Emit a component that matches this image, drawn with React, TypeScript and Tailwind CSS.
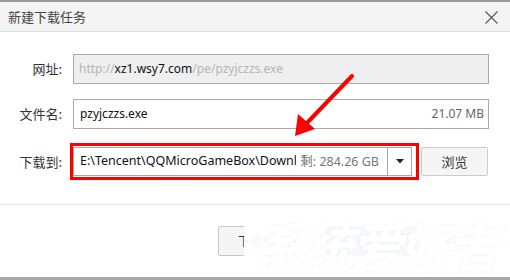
const cjk = 'font-["Microsoft_YaHei","Noto_Sans_CJK_SC",sans-serif]'
const latin = 'font-["Segoe_UI","Noto_Sans","Noto_Sans_CJK_SC",sans-serif]'

function Label({ text }: { text: string }) {
  return (
    <div className={`w-[62px] shrink-0 text-right text-[13px] text-[#333] ${cjk}`}>{text}</div>
  )
}

// 新建下载任务 dialog (reference: 510x280 crop)
export default function App() {
  return (
    <div className={`relative h-[280px] w-[510px] overflow-hidden bg-white ${latin}`}>
      {/* title bar */}
      <div className="flex h-[32px] items-center justify-between border-t-2 border-b border-t-[#9a9a9a] border-b-[#dddddd] bg-[#f4f4f4] pl-[8px] pr-[12px]">
        <span className={`text-[13px] text-[#444] ${cjk}`}>新建下载任务</span>
        <svg width="13" height="13" viewBox="0 0 13 13" className="mt-[1px]">
          <path d="M0.5 0.5 L12.5 12.5 M12.5 0.5 L0.5 12.5" stroke="#555" strokeWidth="1.1" />
        </svg>
      </div>

      {/* form */}
      <div className="flex flex-col pr-[21px] pt-[22px]">
        <div className="flex h-[30px] items-center gap-[11px]">
          <Label text="网址:" />
          <div className="flex h-full flex-1 items-center border border-[#aaaaaa] bg-[#efefef] px-[5px] text-[12px] text-[#b5b5b5]">
            <span>http://</span>
            <span className="text-[#111]">xz1.wsy7.com</span>
            <span>/pe/pzyjczzs.exe</span>
          </div>
        </div>

        <div className="mt-[15px] flex h-[30px] items-center gap-[11px]">
          <Label text="文件名:" />
          <div className="flex h-full flex-1 items-center justify-between border border-[#aaaaaa] bg-white pl-[6px] pr-[4px] text-[12px]">
            <span className="text-[#111]">pzyjczzs.exe</span>
            <span className="text-[#666]">21.07 MB</span>
          </div>
        </div>

        <div className="mt-[18px] flex h-[29px] items-center gap-[11px]">
          <Label text="下载到:" />
          <div className="relative flex h-full w-[339px] items-center border border-[#aaaaaa] bg-white text-[12.5px]">
            <div className="flex min-w-0 flex-1 items-center pl-[6px] pr-[8px]">
              <span className="min-w-0 flex-1 overflow-hidden whitespace-nowrap text-[#111]">
                E:\Tencent\QQMicroGameBox\Downl
              </span>
              <span className="ml-[4px] shrink-0 text-[#777]">
                <span className={cjk}>剩</span>: 284.26 GB
              </span>
            </div>
            <div className="flex h-full w-[24px] items-center justify-center border-l border-[#aaaaaa]">
              <svg width="8" height="5" viewBox="0 0 8 5">
                <path d="M0 0 H8 L4 4.5 Z" fill="#222" />
              </svg>
            </div>
            {/* red annotation box */}
            <div className="pointer-events-none absolute -bottom-[5px] -left-[4px] -right-[8px] -top-[5px] border-[3px] border-[#ff0000]" />
          </div>
          <button
            type="button"
            className={`ml-[-2px] h-full w-[67px] rounded-[2px] border border-[#cccccc] bg-[#f5f5f5] text-[13px] text-[#333] ${cjk}`}
          >
            浏览
          </button>
        </div>
      </div>

      <div className="mt-[28px] border-t border-[#e2e2e2]" />

      {/* footer buttons */}
      <div className={`flex justify-end gap-[8px] pr-[21px] pt-[21px] text-[12px] ${cjk}`}>
        <button type="button" className="h-[30px] w-[100px] rounded-[2px] border border-[#c8c8c8] bg-[#f5f5f5] text-[#333]">
          下载并运行
        </button>
        <button type="button" className="h-[30px] w-[92px] rounded-[2px] border border-[#2f80e0] bg-[#3a8ee6] text-white">
          下载
        </button>
        <button type="button" className="h-[30px] w-[63px] rounded-[2px] border border-[#c8c8c8] bg-[#f5f5f5] text-[#333]">
          取消
        </button>
      </div>

      {/* bottom edge */}
      <div className="absolute bottom-0 left-0 right-0 h-[3px] bg-[#a8a8a8]" />

      {/* watermark */}
      <div
        className={`absolute left-[244px] top-[214px] flex h-[61px] w-[262px] items-center justify-center bg-white/95 text-[52px] font-black italic leading-none tracking-[-3px] text-white ${cjk}`}
        style={{ textShadow: '0 0 2px rgba(0,0,0,0.08)' }}
      >
        系统爱好者
      </div>

      {/* red arrow */}
      <svg className="pointer-events-none absolute left-0 top-0" width="510" height="280">
        <line x1="352" y1="76" x2="306" y2="124" stroke="#ff0000" strokeWidth="4" strokeLinecap="round" />
        <path d="M295 136 L298 114 L315 129 Z" fill="#ff0000" />
      </svg>
    </div>
  )
}
